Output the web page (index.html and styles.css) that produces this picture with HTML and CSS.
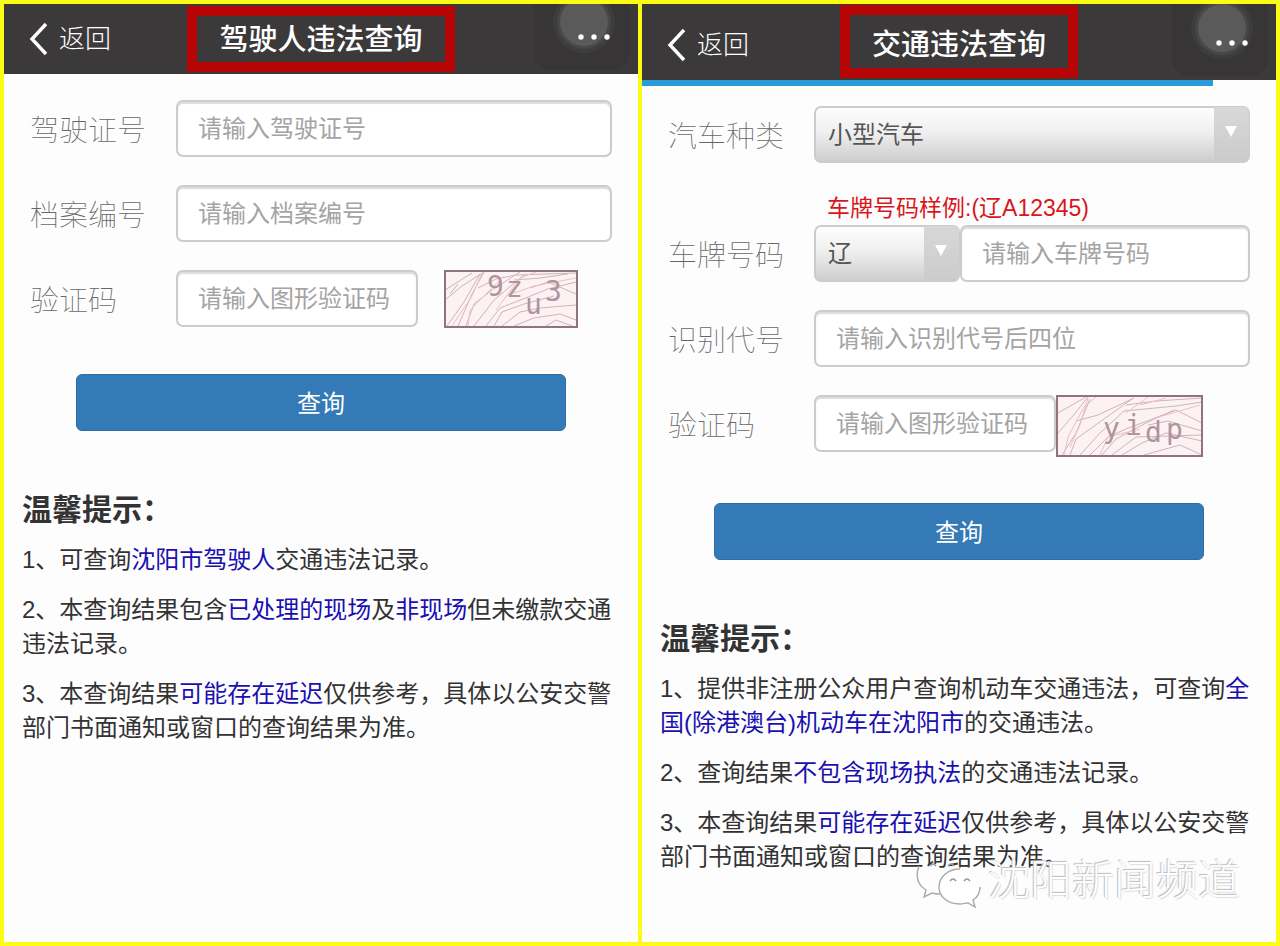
FILE: index.html
```html
<!DOCTYPE html>
<html lang="zh-CN">
<head>
    <meta charset="UTF-8">
    <meta name="viewport" content="width=device-width, initial-scale=1.0">
    <title>交通违法查询</title>
    <link rel="stylesheet" href="styles.css">
</head>
<body>
    <!-- Driver query -->
    <section class="panel">
        <header class="navbar">
            <a href="#" class="back">
                <svg width="20" height="34" viewBox="0 0 20 34"><path d="M17 2 L3 17 L17 32" fill="none" stroke="#fff" stroke-width="3.4"/></svg>
                <span>返回</span>
            </a>
            <h1 class="title">驾驶人违法查询</h1>
            <button type="button" class="more" aria-label="更多">
                <svg width="104" height="70" viewBox="0 0 104 70">
                    <rect x="0" y="-30" width="96" height="96" rx="16" fill="#373536"/>
                    <circle cx="50" cy="18" r="31" fill="#3e3d3e"/>
                    <circle cx="50" cy="18" r="27" fill="#484748"/>
                    <circle cx="50" cy="18" r="24" fill="#5b5a5b"/>
                    <g fill="#fff"><circle cx="47" cy="33" r="2.7"/><circle cx="60" cy="33" r="2.7"/><circle cx="73" cy="33" r="2.7"/></g>
                </svg>
            </button>
        </header>
        <form class="form">
            <div class="row">
                <label for="licence">驾驶证号</label>
                <input type="text" id="licence" class="field" placeholder="请输入驾驶证号">
            </div>
            <div class="row">
                <label for="archive">档案编号</label>
                <input type="text" id="archive" class="field" placeholder="请输入档案编号">
            </div>
            <div class="row">
                <label for="code1">验证码</label>
                <input type="text" id="code1" class="field field-code" placeholder="请输入图形验证码">
                <svg class="captcha captcha-gap" width="134" height="58" viewBox="0 0 134 58">
                    <rect x="1" y="1" width="132" height="56" fill="#fcf1f3"/>
                    <g fill="none" stroke="#cdb5bd" stroke-width="1">
                        <path d="M1 20 L28 3 M1 30 L18 16 L40 2 M3 56 L20 32 L36 4 M14 56 L28 24 L40 2 M22 56 L30 34 L48 20 L76 2 M30 56 L50 30 L62 20 L80 5"/>
                        <path d="M42 56 L56 38 L84 27 L104 19 L132 12 M50 56 L58 42 L80 34 L110 26 M58 56 L76 42 L96 38 L132 35 M34 18 L52 9 L72 5 L132 3"/>
                        <path d="M70 10 L96 8 L124 4 M86 18 L104 12 L132 24 M70 56 L90 48 L116 44 L132 50 M102 56 L112 50 L128 56 M6 24 L14 14"/>
                    </g>
                    <g fill="none" stroke="#edbfc8" stroke-width="1"><path d="M8 56 L28 26 L38 3 M24 56 L26 40 L60 6 M52 40 L76 8 L92 2 M62 26 L90 16 L132 8"/></g>
                    <g class="captcha-text"><text x="43" y="26">9</text><text x="62" y="27">z</text><text x="81" y="44">u</text><text x="101" y="31">3</text></g>
                    <rect x="1" y="1" width="132" height="56" fill="none" stroke="#8f757b" stroke-width="2"/>
                </svg>
            </div>
            <button type="submit" class="submit">查询</button>
        </form>
        <div class="tips">
            <h2>温馨提示：</h2>
            <p>1、可查询<em>沈阳市驾驶人</em>交通违法记录。</p>
            <p>2、本查询结果包含<em>已处理的现场</em>及<em>非现场</em>但未缴款交通违法记录。</p>
            <p>3、本查询结果<em>可能存在延迟</em>仅供参考，具体以公安交警部门书面通知或窗口的查询结果为准。</p>
        </div>
    </section>

    <!-- Vehicle query -->
    <section class="panel">
        <header class="navbar navbar-tall">
            <a href="#" class="back">
                <svg width="20" height="34" viewBox="0 0 20 34"><path d="M17 2 L3 17 L17 32" fill="none" stroke="#fff" stroke-width="3.4"/></svg>
                <span>返回</span>
            </a>
            <h1 class="title">交通违法查询</h1>
            <button type="button" class="more" aria-label="更多">
                <svg width="104" height="70" viewBox="0 0 104 70">
                    <rect x="0" y="-30" width="96" height="96" rx="16" fill="#373536"/>
                    <circle cx="50" cy="18" r="31" fill="#3e3d3e"/>
                    <circle cx="50" cy="18" r="27" fill="#484748"/>
                    <circle cx="50" cy="18" r="24" fill="#5b5a5b"/>
                    <g fill="#fff"><circle cx="47" cy="33" r="2.7"/><circle cx="60" cy="33" r="2.7"/><circle cx="73" cy="33" r="2.7"/></g>
                </svg>
            </button>
            <div class="progress"></div>
        </header>
        <form class="form">
            <div class="row">
                <label for="type">汽车种类</label>
                <div class="select">
                    <select id="type"><option>小型汽车</option></select>
                </div>
            </div>
            <div class="plate">
                <p class="hint">车牌号码样例:(辽A12345)</p>
                <div class="row">
                    <label for="plate">车牌号码</label>
                    <div class="select select-small">
                        <select id="province" aria-label="省份"><option>辽</option></select>
                    </div>
                    <input type="text" id="plate" class="field" placeholder="请输入车牌号码">
                </div>
            </div>
            <div class="row">
                <label for="vin">识别代号</label>
                <input type="text" id="vin" class="field" placeholder="请输入识别代号后四位">
            </div>
            <div class="row">
                <label for="code2">验证码</label>
                <input type="text" id="code2" class="field field-code" placeholder="请输入图形验证码">
                <svg class="captcha" width="147" height="62" viewBox="0 0 147 62">
                    <rect x="1" y="1" width="145" height="60" fill="#fcf1f3"/>
                    <g fill="none" stroke="#cdb5bd" stroke-width="1">
                        <path d="M2 18 L30 2 M2 38 L16 22 L32 2 M6 60 L20 38 L34 4 M14 60 L20 44 L48 24 L76 4 M20 26 L42 20 L78 3"/>
                        <path d="M24 60 L44 38 L68 16 L120 11 L146 7 M34 60 L52 42 L70 34 L120 15 L146 28 M46 60 L60 44 L90 28 L118 15"/>
                        <path d="M56 60 L80 42 L146 40 M66 60 L86 48 L110 38 L146 46 M88 60 L124 50 L146 60 M92 30 L112 26 L146 36 M70 10 L100 6 L146 3"/>
                    </g>
                    <g fill="none" stroke="#edbfc8" stroke-width="1"><path d="M8 60 L12 42 L28 12 L40 2 M14 52 L24 30 L32 3 M44 60 L52 42 L84 34 M84 10 L110 3 M70 18 L92 2 M96 24 L144 10"/></g>
                    <g class="captcha-text"><text x="47" y="43">y</text><text x="69" y="40">i</text><text x="89" y="47">d</text><text x="110" y="44">p</text></g>
                    <rect x="1" y="1" width="145" height="60" fill="none" stroke="#8f757b" stroke-width="2"/>
                </svg>
            </div>
            <button type="submit" class="submit">查询</button>
        </form>
        <div class="tips">
            <h2>温馨提示：</h2>
            <p>1、提供非注册公众用户查询机动车交通违法，可查询<em>全国(除港澳台)机动车在沈阳市</em>的交通违法。</p>
            <p>2、查询结果<em>不包含现场执法</em>的交通违法记录。</p>
            <p>3、本查询结果<em>可能存在延迟</em>仅供参考，具体以公安交警部门书面通知或窗口的查询结果为准。</p>
        </div>
        <div class="watermark">
            <svg width="66" height="56" viewBox="0 0 66 56">
                <g fill="none" stroke="#aaa" stroke-width="1.4">
                    <path d="M3 13 C-1 24 2 32 10 37 L8 44 L16 40 C19 41 22 41 24 41"/>
                    <path d="M44 16 C32 16 23 24 23 34 C23 44 32 51 44 51 C47 51 50 50 52 50 L59 54 L57 47 C62 44 64 39 64 34" fill="#fff"/>
                </g>
                <g fill="none" stroke="#999" stroke-width="1.5"><path d="M14 13 q3 -4 6 0 M32 13 q3 -4 6 0 M34 28 q3 -4 6 0 M48 28 q3 -4 6 0"/></g>
            </svg>
            <span>沈阳新闻频道</span>
        </div>
    </section>
</body>
</html>
```

FILE: styles.css
```css
* {
    box-sizing: border-box;
}

body {
    margin: 0;
    padding: 4px;
    min-height: 100vh;
    display: grid;
    grid-template-columns: minmax(0, 1fr) minmax(0, 1fr);
    gap: 4px;
    background: #fbfb14;
    font-family: "Liberation Sans", "Noto Sans CJK SC", sans-serif;
    font-size: 24px;
    color: #333;
}

.panel {
    position: relative;
    background: #fefdfe;
    overflow: hidden;
}

/* Top bar */
.navbar {
    position: relative;
    display: grid;
    grid-template-columns: 1fr auto 1fr;
    align-items: center;
    height: 70px;
    background: #3b393a;
}

.navbar-tall {
    height: 76px;
    padding-top: 6px;
}

.back {
    display: flex;
    align-items: center;
    gap: 10px;
    padding-left: 25px;
    color: #fff;
    font-size: 26px;
    font-weight: 300;
    line-height: 34px;
    text-decoration: none;
}

.title {
    align-self: stretch;
    display: flex;
    align-items: center;
    margin: 2px 0;
    padding: 0 22px 4px;
    border: 10px solid #b70404;
    color: #fff;
    font-size: 29px;
    font-weight: 500;
}

.navbar-tall .title {
    margin-top: -5px;
    padding-bottom: 0;
}

.more {
    justify-self: end;
    padding: 0;
    border: 0;
    background: none;
}

.more svg {
    display: block;
    overflow: visible;
}

.progress {
    position: absolute;
    left: 0;
    top: 100%;
    width: 90%;
    height: 6px;
    background: #2b9bd7;
}

/* Form */
.form {
    display: flex;
    flex-direction: column;
    gap: 28px;
    padding: 26px 26px 0;
}

.row {
    display: flex;
    align-items: flex-start;
}

.row label {
    flex: 0 0 146px;
    height: 57px;
    color: #666;
    font-size: 29px;
    font-weight: 100;
    line-height: 62px;
}

.field {
    flex: 1;
    min-width: 0;
    height: 57px;
    padding: 0 20px;
    border: 2px solid #ccc;
    border-radius: 7px;
    background: #fff;
    box-shadow: inset 0 2px 1px #ddd;
    color: #555;
    font: inherit;
}

.field::placeholder {
    color: #a4a4a4;
    opacity: 1;
}

.field-code {
    flex: 0 0 242px;
}

.captcha {
    flex: none;
}

.captcha-gap {
    margin-left: 26px;
}

.captcha-text {
    fill: #b0949c;
    font-family: "DejaVu Sans Mono", "Liberation Mono", monospace;
    font-size: 28px;
}

.hint {
    margin: 0;
    padding-left: 159px;
    color: #d8161b;
    font-size: 23px;
    line-height: 34px;
}

.select {
    position: relative;
    flex: 1;
    height: 57px;
}

.select-small {
    flex: 0 0 146px;
}

.select select {
    width: 100%;
    height: 100%;
    padding: 0 12px;
    border: 2px solid #ccc;
    border-radius: 7px;
    appearance: none;
    background: linear-gradient(#fdfdfd, #f0f0f0 45%, #cfcdcf);
    color: #555;
    font: inherit;
}

/* Arrow block on the right of the drop-down */
.select::before {
    content: "";
    position: absolute;
    top: 1px;
    right: 1px;
    bottom: 1px;
    width: 35px;
    border-radius: 0 6px 6px 0;
    background: linear-gradient(#d9d8d9, #cccbcc);
    pointer-events: none;
}

.select::after {
    content: "";
    position: absolute;
    top: 20px;
    right: 13px;
    border: 6px solid transparent;
    border-top: 11px solid #fff;
    border-bottom: 0;
    pointer-events: none;
}

.submit {
    height: 57px;
    margin: 18px 46px 0;
    padding-bottom: 4px;
    border: 1px solid #2e6da4;
    border-radius: 6px;
    background: #337ab7;
    color: #fff;
    font: inherit;
}

/* Tips */
.tips {
    padding: 62px 20px 0 18px;
}

.tips h2 {
    margin: 0;
    font-size: 30px;
    line-height: 34px;
}

.tips p {
    margin: 16px 0 0;
    line-height: 34px;
}

.tips em {
    color: #1a0fb0;
    font-style: normal;
}

.watermark {
    position: absolute;
    right: 36px;
    bottom: 32px;
    display: flex;
    align-items: center;
    gap: 6px;
    color: #fff;
    font-size: 42px;
    font-weight: 300;
    line-height: 58px;
    text-shadow: -1px -1px 1px #bbb, 1px 1px 1px #ddd;
}
```
